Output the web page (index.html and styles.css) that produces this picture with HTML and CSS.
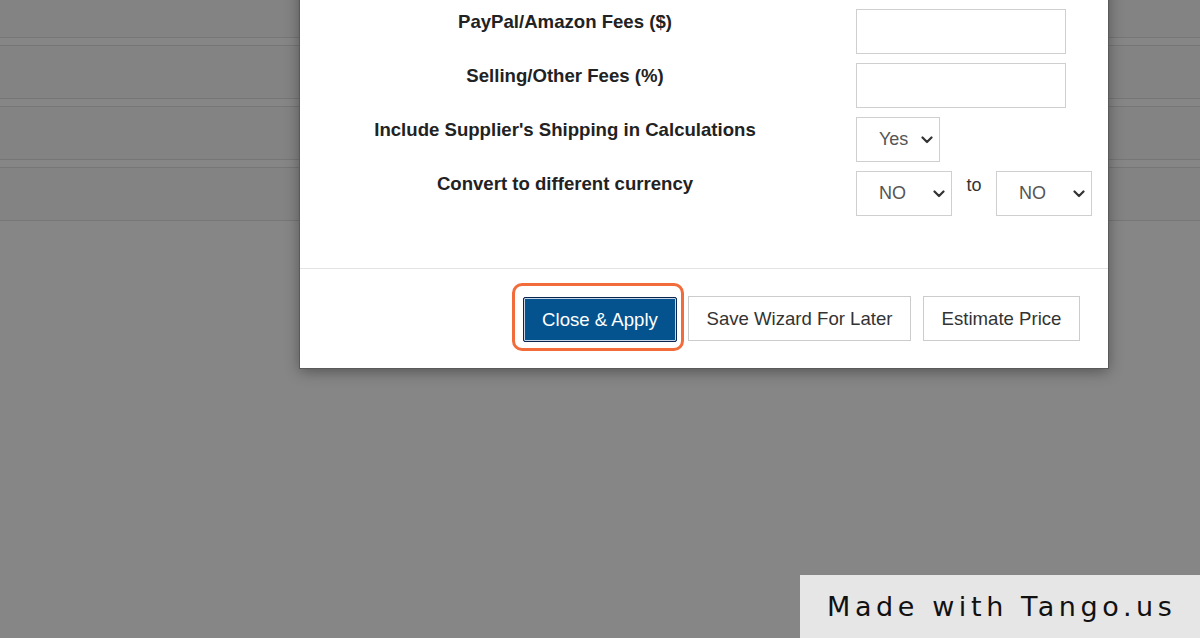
FILE: index.html
```html
<!DOCTYPE html>
<html lang="en">
<head>
  <meta charset="UTF-8" />
  <title>Pricing Wizard</title>
  <link rel="stylesheet" href="styles.css">
</head>
<body>

<div class="backdrop">
  <div class="bg-row bg-row-first"></div>
  <div class="bg-row"></div>
  <div class="bg-row"></div>
  <div class="bg-row"></div>
</div>

<div class="modal">
  <div class="modal-body">
    <div class="form-row form-row-hidden">
      <label class="form-label">Shipping Costs ($)</label>
      <div class="form-field"><input type="text" class="text-input"></div>
    </div>
    <div class="form-row">
      <label class="form-label">PayPal/Amazon Fees ($)</label>
      <div class="form-field"><input type="text" class="text-input"></div>
    </div>
    <div class="form-row">
      <label class="form-label">Selling/Other Fees (%)</label>
      <div class="form-field"><input type="text" class="text-input"></div>
    </div>
    <div class="form-row">
      <label class="form-label">Include Supplier's Shipping in Calculations</label>
      <div class="form-field">
        <div class="select select-yes">
          <span>Yes</span>
          <svg width="12" height="8" viewBox="0 0 12 8"><path d="M1.5 1.5 L6 6 L10.5 1.5" fill="none" stroke="#333" stroke-width="2.2" stroke-linecap="round" stroke-linejoin="round"/></svg>
        </div>
      </div>
    </div>
    <div class="form-row">
      <label class="form-label">Convert to different currency</label>
      <div class="form-field">
        <div class="select select-cur">
          <span>NO</span>
          <svg width="12" height="8" viewBox="0 0 12 8"><path d="M1.5 1.5 L6 6 L10.5 1.5" fill="none" stroke="#333" stroke-width="2.2" stroke-linecap="round" stroke-linejoin="round"/></svg>
        </div>
        <span class="to-text">to</span>
        <div class="select select-cur">
          <span>NO</span>
          <svg width="12" height="8" viewBox="0 0 12 8"><path d="M1.5 1.5 L6 6 L10.5 1.5" fill="none" stroke="#333" stroke-width="2.2" stroke-linecap="round" stroke-linejoin="round"/></svg>
        </div>
      </div>
    </div>
  </div>

  <div class="modal-footer">
    <div class="highlight">
      <button class="btn btn-primary">Close &amp; Apply</button>
    </div>
    <button class="btn btn-default btn-save">Save Wizard For Later</button>
    <button class="btn btn-default btn-estimate">Estimate Price</button>
  </div>
</div>

<div class="tango-badge">Made with Tango.us</div>

</body>
</html>
```

FILE: styles.css
```css
body {
  margin: 0;
  height: 638px;
  overflow: hidden;
  background-color: #868686;
  font-family: "Liberation Sans", Arial, Helvetica, sans-serif;
}

.bg-row {
  height: 52px;
  background-color: #838383;
  border-top: 1px solid #767676;
  border-bottom: 1px solid #767676;
  margin-bottom: 7px;
}

.bg-row-first {
  height: 37px;
  border-top: none;
}

.modal {
  position: absolute;
  left: 300px;
  top: -54px;
  width: 808px;
  background-color: #ffffff;
  box-shadow: 0 0 0 1px #5a5a5a, 0 3px 14px rgba(0, 0, 0, 0.4);
}

.modal-body {
  padding-bottom: 52px;
}

.form-row {
  display: flex;
  padding-top: 9px;
}

.form-row-hidden .form-label {
  visibility: hidden;
}

.form-label {
  width: 530px;
  padding-top: 3px;
  text-align: center;
  font-size: 18.6px;
  line-height: 20px;
  font-weight: bold;
  color: #222;
}

.form-field {
  margin-left: 26px;
  display: flex;
  align-items: flex-start;
}

.text-input {
  box-sizing: border-box;
  width: 210px;
  height: 45px;
  border: 1px solid #cfcfcf;
  margin: 0;
  padding: 0 10px;
  font-size: 17px;
  outline: none;
}

.select {
  box-sizing: border-box;
  height: 45px;
  border: 1px solid #cfcfcf;
  display: flex;
  align-items: center;
  font-size: 18px;
  color: #555;
}

.select svg {
  margin-left: auto;
  margin-right: 6px;
}

.select-yes {
  width: 84px;
  padding-left: 22px;
}

.select-cur {
  width: 96px;
  padding-left: 22px;
}

.to-text {
  width: 44px;
  text-align: center;
  padding-top: 4px;
  font-size: 18px;
  line-height: 20px;
  color: #333;
}

.modal-footer {
  border-top: 1px solid #e3e3e3;
  display: flex;
  justify-content: flex-end;
  align-items: center;
  padding: 26px 28px 26px 0;
}

.highlight {
  position: relative;
  display: flex;
}

.highlight::after {
  content: "";
  position: absolute;
  left: -11px;
  right: -7px;
  top: -12px;
  bottom: -9px;
  border: 3px solid #f26b3a;
  border-radius: 10px;
  pointer-events: none;
}

.btn {
  box-sizing: border-box;
  height: 45px;
  font-family: "Liberation Sans", Arial, Helvetica, sans-serif;
  font-size: 18.6px;
  cursor: pointer;
}

.btn-primary {
  width: 154px;
  background-color: #04538f;
  color: #ffffff;
  border: 1px solid #0b2552;
  border-radius: 2px;
  box-shadow: inset 0 0 0 1px #c9d6e6, inset 0 0 0 2px #04538f;
  margin-top: 2px;
}

.btn-default {
  background-color: #ffffff;
  color: #333;
  border: 1px solid #cccccc;
  border-radius: 0;
  margin-left: 12px;
}

.btn-save {
  margin-left: 11px;
  width: 223px;
}

.btn-estimate {
  width: 157px;
}

.tango-badge {
  position: absolute;
  left: 800px;
  top: 575px;
  width: 400px;
  height: 63px;
  background-color: #e6e6e6;
  box-sizing: border-box;
  padding: 17px 0 0 27px;
  font-family: "DejaVu Sans", sans-serif;
  font-size: 27px;
  line-height: 30px;
  letter-spacing: 4.6px;
  color: #111;
  white-space: nowrap;
}
```
